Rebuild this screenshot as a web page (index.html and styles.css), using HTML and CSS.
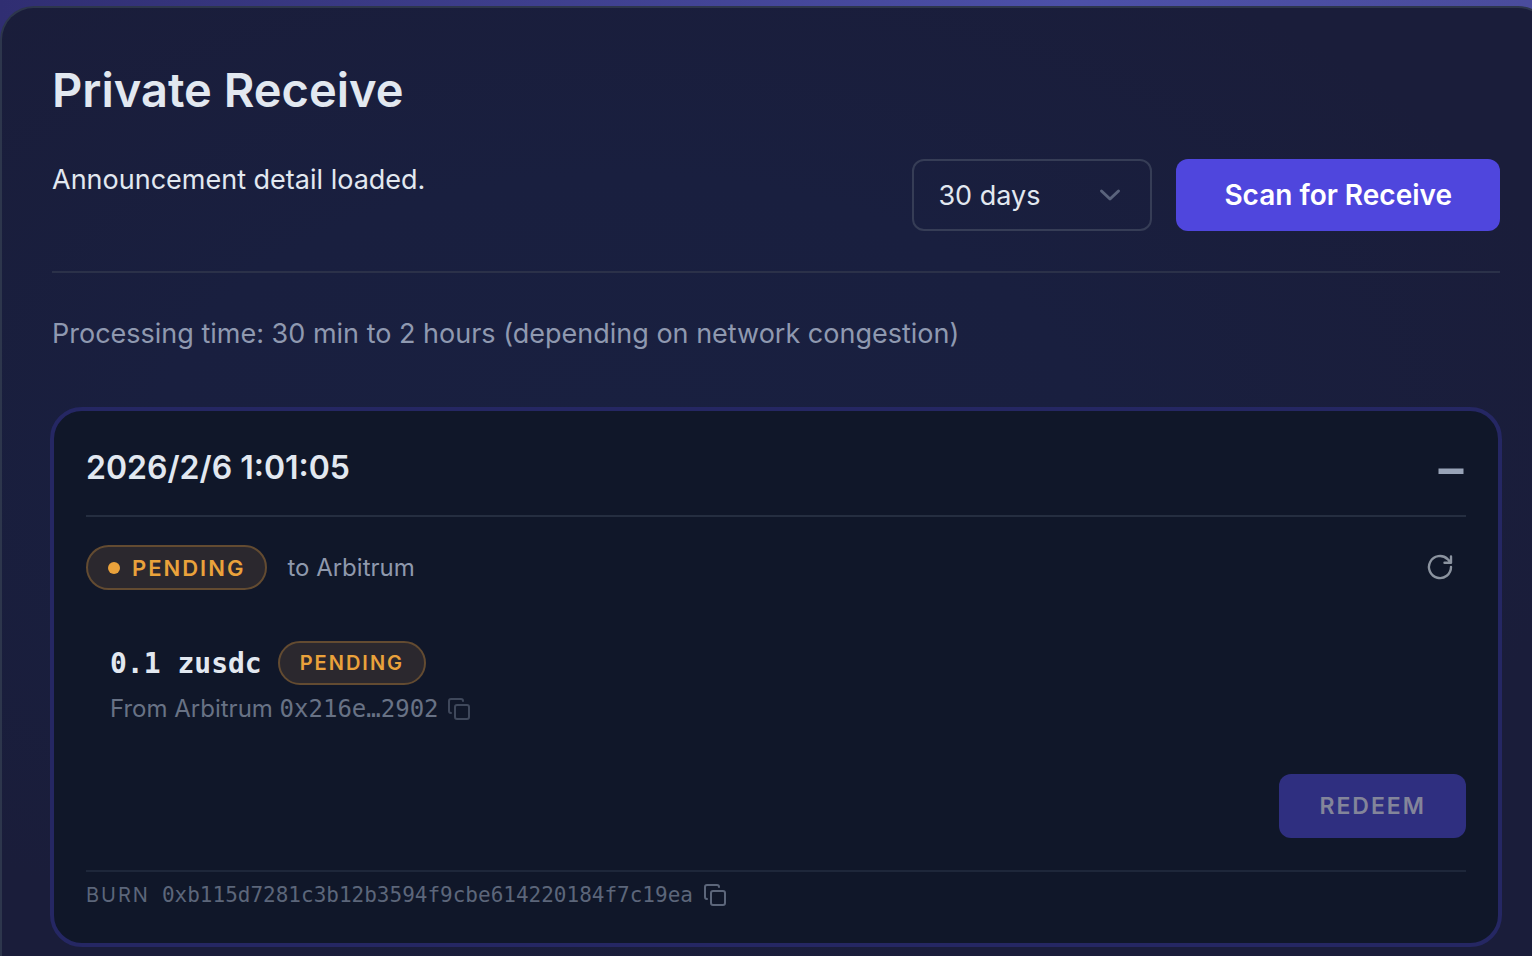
FILE: index.html
```html
<!DOCTYPE html>
<html lang="en">
<head>
    <meta charset="UTF-8">
    <meta name="viewport" content="width=device-width, initial-scale=1.0">
    <title>Private Receive</title>
    <link rel="stylesheet" href="styles.css">
</head>
<body>
    <main class="panel">
        <h1>Private Receive</h1>
        <div class="toolbar">
            <p class="status">Announcement detail loaded.</p>
            <div class="controls">
                <div class="select-wrap">
                    <select class="range-select" aria-label="Scan range">
                        <option>7 days</option>
                        <option selected>30 days</option>
                        <option>90 days</option>
                    </select>
                    <svg class="chevron" viewBox="0 0 24 24" width="24" height="24"><path d="M3.500 8 12 16 20.500 8"/></svg>
                </div>
                <button class="scan-btn" type="button">Scan for Receive</button>
            </div>
        </div>
        <p class="note">Processing time: 30 min to 2 hours (depending on network congestion)</p>

        <section class="card">
            <header class="card-header">
                <h2>2026/2/6 1:01:05</h2>
                <button class="icon-btn collapse-btn" type="button" aria-label="Collapse">
                    <svg viewBox="0 0 26 6" width="26" height="6"><rect x="0.500" y="0.500" width="25" height="5.500"/></svg>
                </button>
            </header>
            <div class="summary">
                <span class="badge"><span class="dot"></span>PENDING</span>
                <span class="chain">to Arbitrum</span>
                <button class="icon-btn refresh-btn" type="button" aria-label="Refresh">
                    <svg viewBox="0 0 28 28" width="28" height="28"><path d="M25 13A11 11 0 1 1 21.500 5L25 8.700M25 2.500V8.700H18.500"/></svg>
                </button>
            </div>
            <div class="item">
                <div class="amount-row">
                    <span class="amount">0.1 zusdc</span>
                    <span class="badge badge-small">PENDING</span>
                </div>
                <div class="from-row">
                    <span>From Arbitrum <span class="mono">0x216e…2902</span></span>
                    <button class="icon-btn copy-btn" type="button" aria-label="Copy address">
                        <svg viewBox="0 0 24 24" width="24" height="24"><rect x="8" y="8" width="14" height="14" rx="2"/><path d="M4 16c-1.100 0-2-.9-2-2V4c0-1.100.9-2 2-2h10c1.100 0 2 .9 2 2"/></svg>
                    </button>
                </div>
            </div>
            <div class="actions">
                <button class="redeem-btn" type="button" disabled>REDEEM</button>
            </div>
            <footer class="burn-row">
                <span class="burn-label">BURN</span>
                <span class="mono">0xb115d7281c3b12b3594f9cbe614220184f7c19ea</span>
                <button class="icon-btn copy-btn copy-burn" type="button" aria-label="Copy burn address">
                    <svg viewBox="0 0 24 24" width="24" height="24"><rect x="8" y="8" width="14" height="14" rx="2"/><path d="M4 16c-1.100 0-2-.9-2-2V4c0-1.100.9-2 2-2h10c1.100 0 2 .9 2 2"/></svg>
                </button>
            </footer>
        </section>
    </main>
</body>
</html>
```

FILE: styles.css
```css
* {
    box-sizing: border-box;
}

body {
    margin: 0;
    padding-top: 6px;
    min-height: 100vh;
    overflow-x: hidden;
    background: linear-gradient(90deg, #302e72 0%, #4c50a8 70%, #4a4c9c 100%);
    color: #e2e8f0;
    font-family: Inter, "Liberation Sans", sans-serif;
    font-size: 27px;
}

h1, h2, p {
    margin: 0;
}

button, select {
    font-family: inherit;
}

/* the panel runs past the right edge of the window */
.panel {
    margin-right: -20px;
    min-height: calc(100vh - 6px);
    padding: 52px 50px 8px;
    border: 2px solid #2d364c;
    border-bottom: none;
    border-radius: 34px 34px 0 0;
    background: radial-gradient(ellipse at 40% 45%, #192040 0%, #191f3f 35%, #1a1d3a 75%);
}

h1 {
    font-size: 47px;
    line-height: 60px;
    font-weight: 600;
}

.toolbar {
    display: flex;
    justify-content: space-between;
    align-items: flex-start;
    margin-top: 39px;
    padding-bottom: 40px;
    border-bottom: 2px solid #2b3149;
}

.status {
    line-height: 42px;
}

.controls {
    display: flex;
    gap: 24px;
}

.select-wrap {
    position: relative;
    width: 240px;
}

.range-select {
    width: 100%;
    height: 72px;
    padding: 0 60px 0 24px;
    border: 2px solid #363d56;
    border-radius: 12px;
    appearance: none;
    background: transparent;
    color: #e2e8f0;
    font-size: 27px;
}

.chevron {
    position: absolute;
    top: 24px;
    right: 30px;
    fill: none;
    stroke: #5a637c;
    stroke-width: 3;
    stroke-linecap: round;
    stroke-linejoin: round;
    pointer-events: none;
}

.scan-btn {
    height: 72px;
    padding: 0 48px;
    border: none;
    border-radius: 12px;
    background: #4f46dd;
    color: #fff;
    font-size: 28px;
    font-weight: 600;
    cursor: pointer;
}

.note {
    margin-top: 40px;
    line-height: 42px;
    color: #8f99b0;
}

.card {
    margin: 52px -2px 0;
    padding: 32px 32px 31px;
    border: 4px solid #252763;
    border-radius: 32px;
    background: #101729;
}

.card-header {
    display: flex;
    justify-content: space-between;
    align-items: center;
    padding-bottom: 22px;
    border-bottom: 2px solid #252e40;
}

h2 {
    font-size: 32px;
    line-height: 50px;
    font-weight: 600;
}

.icon-btn {
    display: flex;
    padding: 0;
    border: none;
    background: none;
    cursor: pointer;
}

.collapse-btn {
    padding: 6px 2px 0;
}

.collapse-btn svg {
    fill: #98a3b7;
}

.summary {
    display: flex;
    align-items: center;
    gap: 20px;
    margin-top: 28px;
}

.badge {
    display: inline-flex;
    align-items: center;
    gap: 12px;
    height: 45px;
    padding: 0 20px;
    border: 2px solid #634b31;
    border-radius: 23px;
    background: #2b282e;
    color: #eaa23b;
    font-size: 22px;
    font-weight: 600;
    letter-spacing: 2px;
}

.dot {
    width: 12px;
    height: 12px;
    border-radius: 50%;
    background: #eaa23b;
}

.badge-small {
    height: 44px;
    font-size: 20px;
}

.chain {
    color: #8f99ad;
    font-size: 24px;
}

.refresh-btn {
    margin-left: auto;
    padding: 0 12px;
}

.refresh-btn svg {
    fill: none;
    stroke: #8b939f;
    stroke-width: 2.4;
    stroke-linecap: round;
    stroke-linejoin: round;
}

.item {
    margin-top: 51px;
    padding-left: 24px;
}

.amount-row {
    display: flex;
    align-items: center;
    gap: 16px;
}

.mono, .amount {
    font-family: "DejaVu Sans Mono", monospace;
}

.amount {
    font-size: 28px;
    font-weight: 700;
}

.from-row {
    display: flex;
    align-items: center;
    gap: 8px;
    margin-top: 7px;
    line-height: 34px;
    color: #687285;
    font-size: 24px;
}

.copy-btn svg {
    fill: none;
    stroke: #3f485b;
    stroke-width: 2;
    stroke-linecap: round;
    stroke-linejoin: round;
}

.actions {
    display: flex;
    justify-content: flex-end;
    margin-top: 48px;
}

.redeem-btn {
    height: 64px;
    padding: 0 40px;
    border: none;
    border-radius: 12px;
    background: #2f2f80;
    color: #83859a;
    font-size: 23px;
    font-weight: 600;
    letter-spacing: 2px;
}

.burn-row {
    display: flex;
    align-items: center;
    margin-top: 32px;
    padding-top: 6px;
    border-top: 2px solid #1e273a;
    line-height: 34px;
    color: #5c667a;
    font-size: 21px;
}

.burn-label {
    margin-right: 12px;
    font-size: 20px;
    letter-spacing: 2px;
}

.copy-burn {
    margin-left: 10px;
}

.copy-burn svg {
    stroke: #5c667a;
}
```
